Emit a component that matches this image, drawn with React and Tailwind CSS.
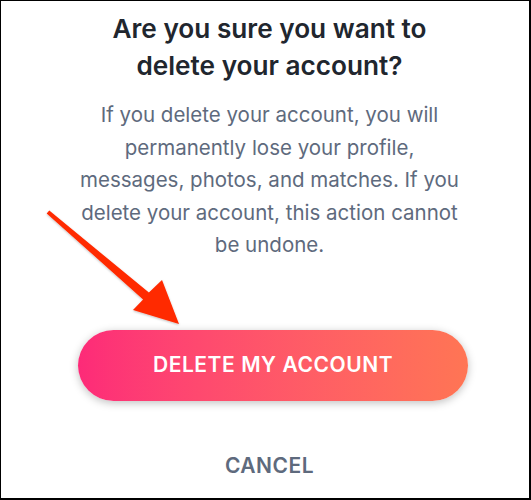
import React from "react";

export default function App() {
  return (
    <div className="relative w-[531px] h-[500px] border-black border-t border-l border-r-2 border-b-2 bg-white pl-[9px] flex flex-col items-center font-['Inter','Liberation_Sans',sans-serif]">
      <h1 className="mt-[9px] text-center text-[26.2px] leading-[37px] font-semibold text-[#21262e]">
        Are you sure you want to
        <br />
        delete your account?
      </h1>
      <p className="mt-[15px] text-center text-[20.5px] leading-[32.5px] text-[#5e6a7d]">
        If you delete your account, you will
        <br />
        permanently lose your profile,
        <br />
        messages, photos, and matches. If you
        <br />
        delete your account, this action cannot
        <br />
        be undone.
      </p>
      <button className="mt-[68px] ml-[7px] w-[390px] h-[71px] rounded-full bg-gradient-to-r from-[#fd2a78] to-[#ff7554] shadow-[0_2px_8px_rgba(0,0,0,0.25)] text-white text-[21px] font-semibold tracking-[0.55px]">
        DELETE MY ACCOUNT
      </button>
      <button className="mt-[50px] text-[21px] leading-[30px] font-semibold text-[#5e6a7d] tracking-[0.5px]">
        CANCEL
      </button>
      <svg
        className="absolute left-[-1px] top-[-1px] pointer-events-none"
        width="531"
        height="500"
        viewBox="0 0 531 500"
      >
        <defs>
          <filter id="sh" x="-10%" y="-10%" width="130%" height="130%">
            <feDropShadow dx="0" dy="1" stdDeviation="1" floodColor="#000" floodOpacity="0.25" />
          </filter>
        </defs>
        <polygon
          filter="url(#sh)"
          fill="#ff2a00"
          points="49.3,210.5 148.9,292.6 162,280 179,324 133,310 143.1,299.4 46.7,213.5"
        />
      </svg>
    </div>
  );
}
